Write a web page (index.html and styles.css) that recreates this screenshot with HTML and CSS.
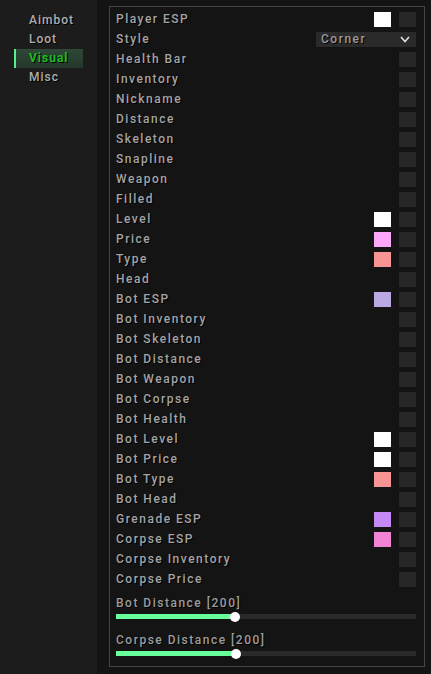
FILE: index.html
```html
<!DOCTYPE html>
<html>
<head>
<meta charset="utf-8">
<link rel="stylesheet" href="styles.css">
</head>
<body>
<div class="app">
  <nav class="sidebar">
    <div class="tab">Aimbot</div>
    <div class="tab">Loot</div>
    <div class="tab active">Visual</div>
    <div class="tab">Misc</div>
  </nav>
  <main class="main">
    <section class="panel">
      <div class="row"><span class="label">Player ESP</span><span class="controls"><span class="swatch" style="background:#ffffff"></span><span class="check"></span></span></div>
      <div class="row"><span class="label">Style</span><span class="controls"><span class="select"><span class="select-text">Corner</span><svg class="chev" width="10" height="7" viewBox="0 0 10 7"><path d="M1 1 L5 5.5 L9 1" fill="none" stroke="#e0e0e0" stroke-width="1.6"/></svg></span></span></div>
      <div class="row"><span class="label">Health Bar</span><span class="controls"><span class="check"></span></span></div>
      <div class="row"><span class="label">Inventory</span><span class="controls"><span class="check"></span></span></div>
      <div class="row"><span class="label">Nickname</span><span class="controls"><span class="check"></span></span></div>
      <div class="row"><span class="label">Distance</span><span class="controls"><span class="check"></span></span></div>
      <div class="row"><span class="label">Skeleton</span><span class="controls"><span class="check"></span></span></div>
      <div class="row"><span class="label">Snapline</span><span class="controls"><span class="check"></span></span></div>
      <div class="row"><span class="label">Weapon</span><span class="controls"><span class="check"></span></span></div>
      <div class="row"><span class="label">Filled</span><span class="controls"><span class="check"></span></span></div>
      <div class="row"><span class="label">Level</span><span class="controls"><span class="swatch" style="background:#ffffff"></span><span class="check"></span></span></div>
      <div class="row"><span class="label">Price</span><span class="controls"><span class="swatch" style="background:#fba8fb"></span><span class="check"></span></span></div>
      <div class="row"><span class="label">Type</span><span class="controls"><span class="swatch" style="background:#f79494"></span><span class="check"></span></span></div>
      <div class="row"><span class="label">Head</span><span class="controls"><span class="check"></span></span></div>
      <div class="row"><span class="label">Bot ESP</span><span class="controls"><span class="swatch" style="background:#b9a8e2"></span><span class="check"></span></span></div>
      <div class="row"><span class="label">Bot Inventory</span><span class="controls"><span class="check"></span></span></div>
      <div class="row"><span class="label">Bot Skeleton</span><span class="controls"><span class="check"></span></span></div>
      <div class="row"><span class="label">Bot Distance</span><span class="controls"><span class="check"></span></span></div>
      <div class="row"><span class="label">Bot Weapon</span><span class="controls"><span class="check"></span></span></div>
      <div class="row"><span class="label">Bot Corpse</span><span class="controls"><span class="check"></span></span></div>
      <div class="row"><span class="label">Bot Health</span><span class="controls"><span class="check"></span></span></div>
      <div class="row"><span class="label">Bot Level</span><span class="controls"><span class="swatch" style="background:#ffffff"></span><span class="check"></span></span></div>
      <div class="row"><span class="label">Bot Price</span><span class="controls"><span class="swatch" style="background:#ffffff"></span><span class="check"></span></span></div>
      <div class="row"><span class="label">Bot Type</span><span class="controls"><span class="swatch" style="background:#f79494"></span><span class="check"></span></span></div>
      <div class="row"><span class="label">Bot Head</span><span class="controls"><span class="check"></span></span></div>
      <div class="row"><span class="label">Grenade ESP</span><span class="controls"><span class="swatch" style="background:#c489f5"></span><span class="check"></span></span></div>
      <div class="row"><span class="label">Corpse ESP</span><span class="controls"><span class="swatch" style="background:#f383d4"></span><span class="check"></span></span></div>
      <div class="row"><span class="label">Corpse Inventory</span><span class="controls"><span class="check"></span></span></div>
      <div class="row"><span class="label">Corpse Price</span><span class="controls"><span class="check"></span></span></div>
      <div class="slider first">
        <div class="slider-label">Bot Distance [200]</div>
        <div class="track"><div class="fill" style="width:119px"><span class="knob"></span></div></div>
      </div>
      <div class="slider">
        <div class="slider-label">Corpse Distance [200]</div>
        <div class="track"><div class="fill" style="width:120px"><span class="knob"></span></div></div>
      </div>
    </section>
  </main>
</div>
</body>
</html>
```

FILE: styles.css
```css
html, body {
  margin: 0;
  padding: 0;
  background: #141414;
}
body {
  font-family: Roboto, "Liberation Sans", sans-serif;
  font-size: 12px;
  font-weight: 500;
  letter-spacing: 1.5px;
  color: #a4a4a4;
  text-shadow: 1px 1px 0 #000;
}
.app {
  display: flex;
  width: 431px;
  height: 674px;
}
.sidebar {
  width: 97px;
  background: #1c1c1c;
  padding-top: 11px;
  box-sizing: border-box;
  letter-spacing: 1px;
}
.tab {
  height: 19px;
  line-height: 19px;
  margin-left: 14px;
  width: 69px;
  padding-left: 15px;
  box-sizing: border-box;
  color: #aeaeae;
}
.tab.active {
  background: linear-gradient(#2f4838, #24382a);
  border-left: 2px solid #55f08c;
  padding-left: 13px;
  color: #1fbd1f;
  font-weight: 700;
}
.main {
  flex: 1;
  padding: 6px 0 0 12px;
}
.panel {
  width: 316px;
  height: 661px;
  box-sizing: border-box;
  border: 1px solid #454545;
  padding: 2px 8px 0 6px;
}
.row {
  height: 20px;
  display: flex;
  align-items: center;
  justify-content: space-between;
}
.controls {
  display: flex;
  align-items: center;
  gap: 8px;
}
.check, .swatch {
  display: block;
  width: 17px;
  height: 15px;
}
.check {
  background: #272727;
}
.select {
  width: 100px;
  height: 15px;
  background: #2a2a2a;
  display: flex;
  align-items: center;
  justify-content: space-between;
  padding: 0 6px 0 5px;
  box-sizing: border-box;
}
.select-text {
  color: #9a9a9a;
  line-height: 15px;
}
.chev {
  display: block;
}
.slider.first {
  margin-top: 6px;
}
.slider {
  margin-top: 13px;
}
.slider-label {
  height: 16px;
  line-height: 16px;
  color: #9c9c9c;
}
.track {
  margin-top: 3px;
  width: 300px;
  height: 5px;
  background: #2a2a2a;
}
.fill {
  position: relative;
  height: 5px;
  background: #66ff99;
}
.knob {
  position: absolute;
  right: -5px;
  top: -2.5px;
  width: 10px;
  height: 10px;
  border-radius: 50%;
  background: #ffffff;
}
```
